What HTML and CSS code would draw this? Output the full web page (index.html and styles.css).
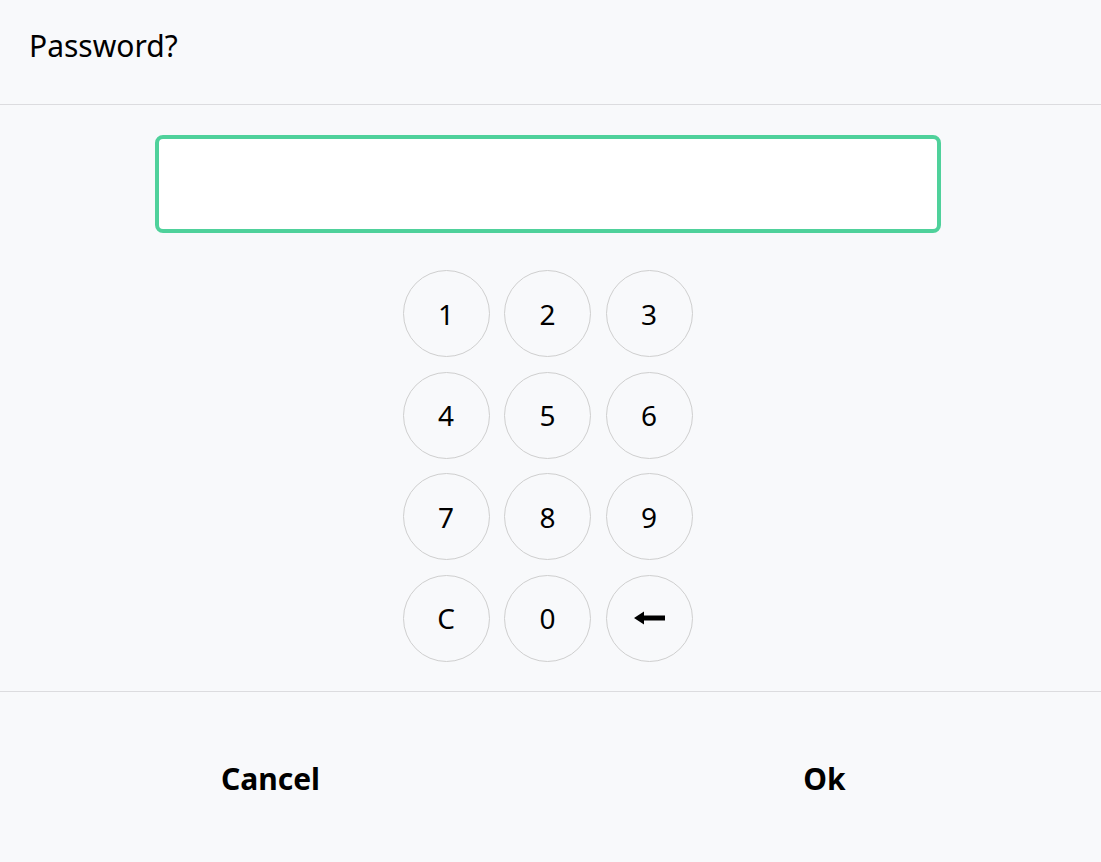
FILE: index.html
```html
<!DOCTYPE html>
<html lang="en">
<head>
    <meta charset="UTF-8">
    <title>Password</title>
    <link rel="stylesheet" href="styles.css">
</head>
<body>
<div class="dialog">
    <div class="header">Password?</div>

    <div class="content">
        <input class="field" type="password">

        <div class="keypad">
            <span class="key">1</span>
            <span class="key">2</span>
            <span class="key">3</span>
            <span class="key">4</span>
            <span class="key">5</span>
            <span class="key">6</span>
            <span class="key">7</span>
            <span class="key">8</span>
            <span class="key">9</span>
            <span class="key">C</span>
            <span class="key">0</span>
            <span class="key">
                <svg width="31" height="14" viewBox="0 0 31 14">
                    <path d="M0 7 L10 0.5 L10 4.5 L31 4.5 L31 9.5 L10 9.5 L10 13.5 Z" fill="#000"/>
                </svg>
            </span>
        </div>
    </div>

    <div class="footer">
        <div class="btn">Cancel</div>
        <div class="btn">Ok</div>
    </div>
</div>
</body>
</html>
```

FILE: styles.css
```css
* {
    margin: 0;
    padding: 0;
    box-sizing: border-box;
}

body {
    background-color: #f8f9fb;
    font-family: "Noto Sans", "Open Sans", sans-serif;
    color: #000;
}

.dialog {
    width: 1101px;
    height: 862px;
    display: flex;
    flex-direction: column;
}

.header {
    height: 105px;
    border-bottom: 1px solid #dcdcdf;
    padding: 25px 0 0 29px;
    font-size: 30px;
}

.content {
    display: flex;
    flex-direction: column;
    align-items: center;
    padding: 30px 0 29px;
    border-bottom: 1px solid #dcdcdf;
}

.field {
    width: 786px;
    height: 98px;
    border: 4px solid #4fd19b;
    border-radius: 8px;
    background-color: #fff;
    outline: none;
    margin-left: -5px;
}

.keypad {
    margin-top: 37px;
    display: grid;
    grid-template-columns: repeat(3, 87px);
    grid-auto-rows: 87px;
    column-gap: 14.5px;
    row-gap: 14.5px;
    margin-left: -6px;
}

.key {
    display: flex;
    align-items: center;
    justify-content: center;
    border: 1px solid #cfcfcf;
    border-radius: 50%;
    font-size: 28px;
    cursor: pointer;
}

.footer {
    flex: 1;
    display: flex;
}

.btn {
    flex: 1;
    display: flex;
    align-items: center;
    justify-content: center;
    font-size: 30px;
    font-weight: bold;
    padding: 4px 6px 0 0;
    cursor: pointer;
}

.btn:first-child {
    padding-right: 13px;
}
```
